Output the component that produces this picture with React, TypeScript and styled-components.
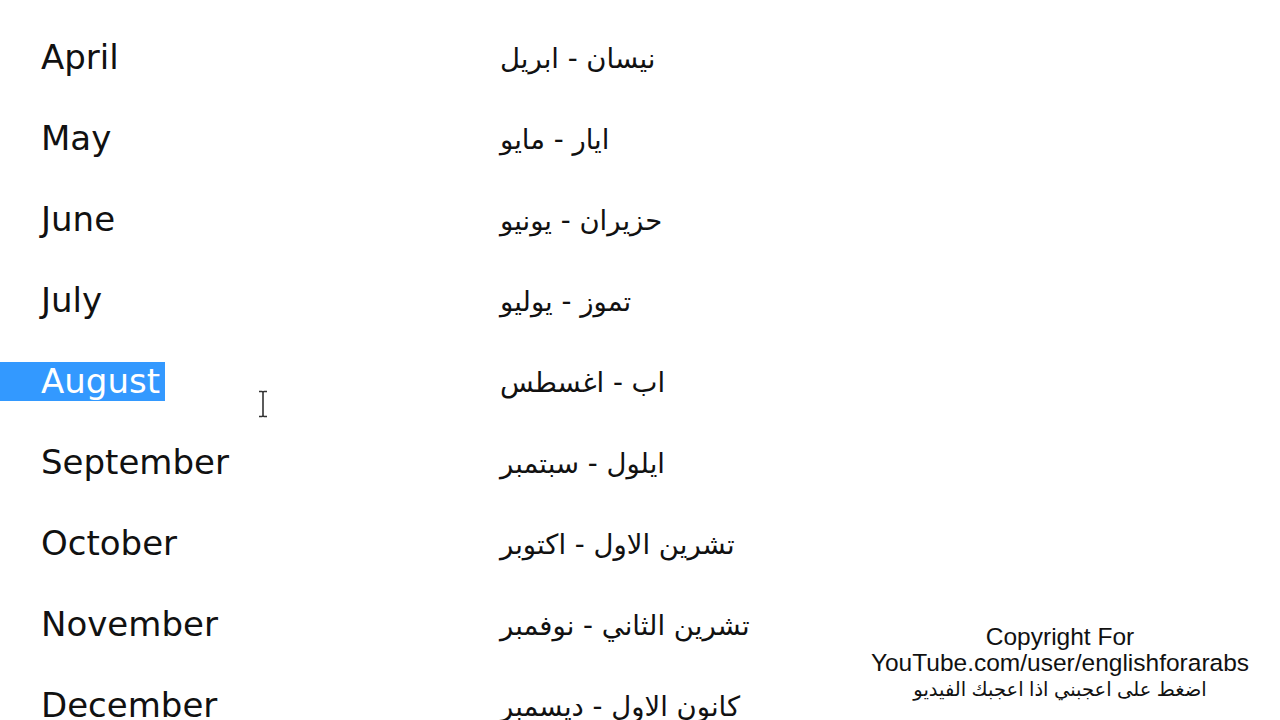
import React from "react";
import styled, { createGlobalStyle } from "styled-components";

const Global = createGlobalStyle`
  html, body { margin: 0; padding: 0; background: #ffffff; }
  body { width: 1280px; height: 720px; overflow: hidden; }
`;

const Page = styled.div`
  position: relative;
  width: 1280px;
  height: 720px;
  overflow: hidden;
  background: #ffffff;
  padding-top: 17px;
  box-sizing: border-box;
`;

const List = styled.div`
  display: flex;
  flex-direction: column;
`;

const Row = styled.div`
  display: grid;
  grid-template-columns: 500px 1fr;
  height: 81px;
  align-items: center;
`;

const English = styled.div`
  display: flex;
  align-items: center;
`;

const Word = styled.span<{ $selected?: boolean }>`
  font-family: "DejaVu Sans", Verdana, sans-serif;
  font-size: 34px;
  line-height: 39px;
  color: ${(p) => (p.$selected ? "#ffffff" : "#111111")};
  background: ${(p) => (p.$selected ? "#3399ff" : "transparent")};
  padding: 0 5px 0 41px;
`;

const Arabic = styled.span`
  font-family: "DejaVu Sans", "Noto Sans", sans-serif;
  font-size: 27.5px;
  color: #111111;
  direction: rtl;
  unicode-bidi: isolate;
`;

const Cursor = styled.svg`
  position: absolute;
  left: 257px;
  top: 390px;
`;

const Watermark = styled.div`
  position: absolute;
  left: 860px;
  width: 400px;
  top: 624px;
  display: flex;
  flex-direction: column;
  align-items: center;
  font-family: "Liberation Sans", Arial, sans-serif;
  color: #111;
`;

const WLine = styled.div`
  font-size: 24.5px;
  line-height: 26px;
`;

const WArabic = styled.div`
  font-family: "Liberation Sans", "DejaVu Sans", sans-serif;
  font-size: 19.5px;
  line-height: 26px;
  direction: rtl;
`;

const months: [string, string][] = [
  ["April", "نيسان - ابريل"],
  ["May", "ايار - مايو"],
  ["June", "حزيران - يونيو"],
  ["July", "تموز - يوليو"],
  ["August", "اب - اغسطس"],
  ["September", "ايلول - سبتمبر"],
  ["October", "تشرين الاول - اكتوبر"],
  ["November", "تشرين الثاني - نوفمبر"],
  ["December", "كانون الاول - ديسمبر"],
];

export default function App() {
  return (
    <Page>
      <Global />
      <List>
        {months.map(([en, ar]) => (
          <Row key={en}>
            <English>
              <Word $selected={en === "August"}>{en}</Word>
            </English>
            <div>
              <Arabic dir="rtl">{ar}</Arabic>
            </div>
          </Row>
        ))}
      </List>
      <Cursor width="12" height="28" viewBox="0 0 12 28">
        <path d="M2 1.5 H5 Q6 1.5 6 3 V25 Q6 26.5 5 26.5 H2 M10 1.5 H7 Q6 1.5 6 3 M10 26.5 H7 Q6 26.5 6 25" stroke="#333" strokeWidth="1.6" fill="none" />
      </Cursor>
      <Watermark>
        <WLine>Copyright For</WLine>
        <WLine>YouTube.com/user/englishforarabs</WLine>
        <WArabic>اضغط على اعجبني اذا اعجبك الفيديو</WArabic>
      </Watermark>
    </Page>
  );
}
